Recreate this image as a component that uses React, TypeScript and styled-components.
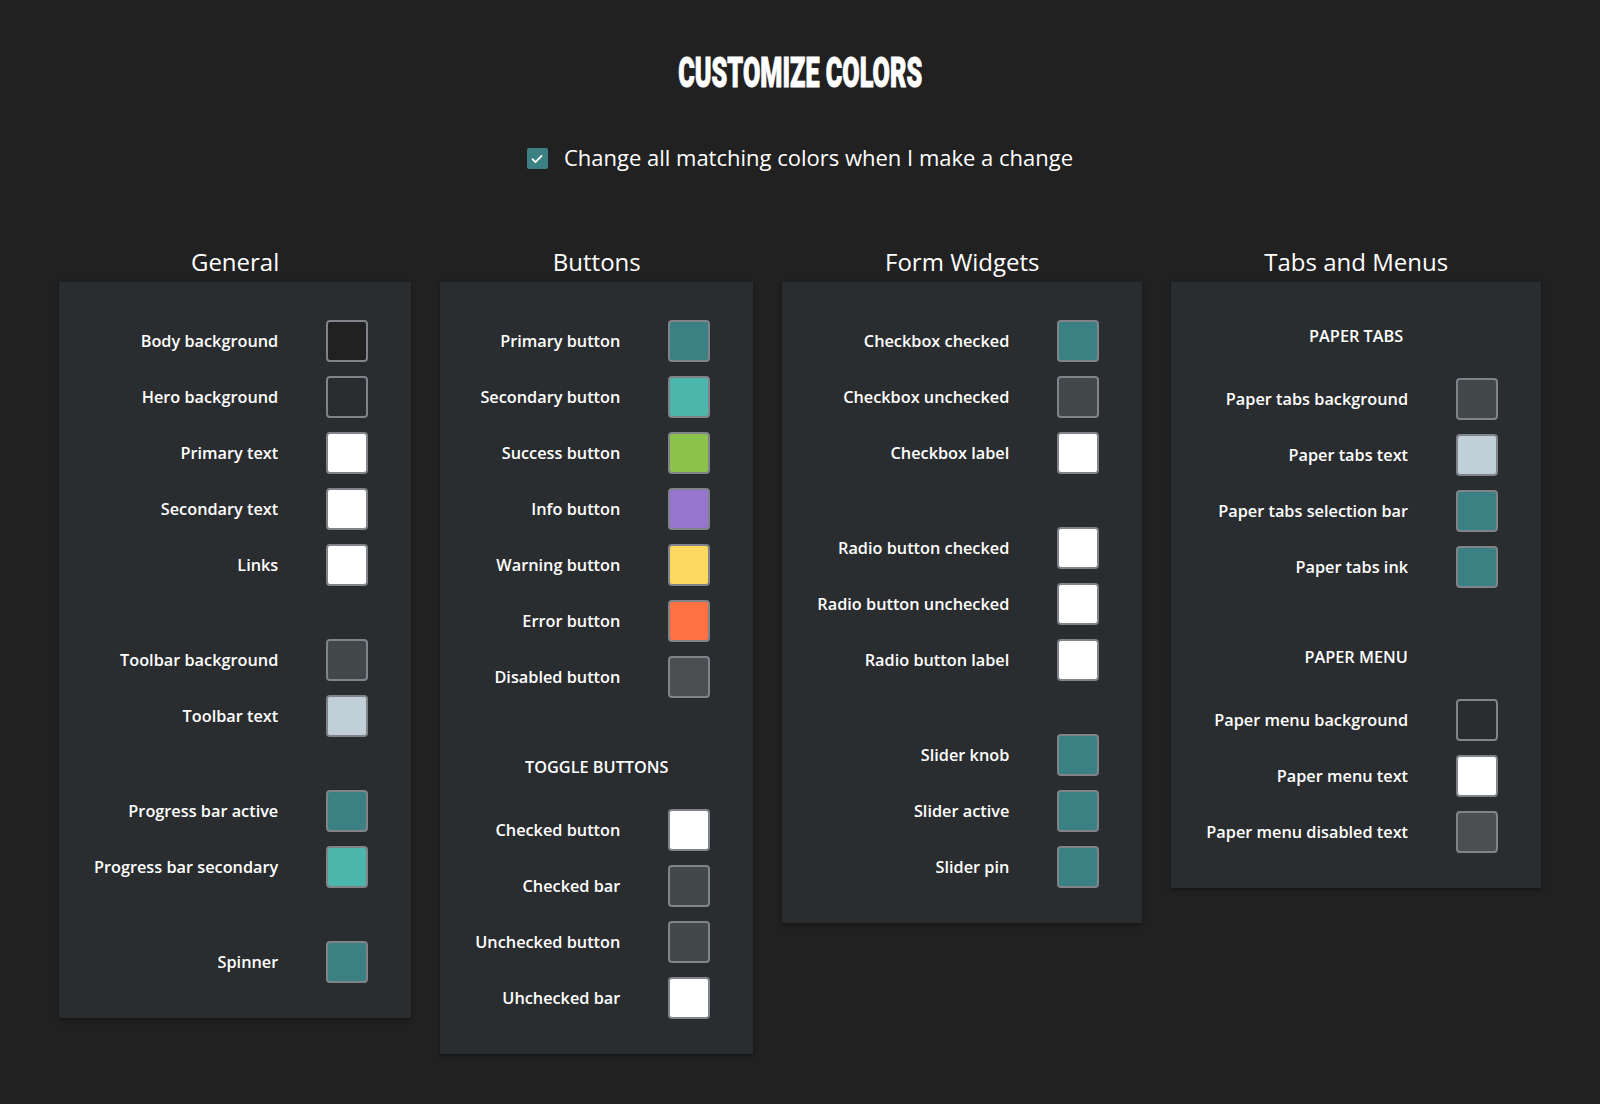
import React from 'react'
import styled, { createGlobalStyle } from 'styled-components'

const TEAL = '#3b8183'
const AQUA = '#4db6ac'
const WHITE = '#ffffff'
const SLATE = '#40484a'
const MIST = '#c1d0d8'
const DIM = '#4b4f51'

type Item = { label: string; color: string }
type Group = { title?: string; items: Item[] }
type Section = { title: string; groups: Group[] }

const sections: Section[] = [
  {
    title: 'General',
    groups: [
      {
        items: [
          { label: 'Body background', color: '#212121' },
          { label: 'Hero background', color: '#2a2d2f' },
          { label: 'Primary text', color: WHITE },
          { label: 'Secondary text', color: WHITE },
          { label: 'Links', color: WHITE },
        ],
      },
      {
        items: [
          { label: 'Toolbar background', color: SLATE },
          { label: 'Toolbar text', color: MIST },
        ],
      },
      {
        items: [
          { label: 'Progress bar active', color: TEAL },
          { label: 'Progress bar secondary', color: AQUA },
        ],
      },
      { items: [{ label: 'Spinner', color: TEAL }] },
    ],
  },
  {
    title: 'Buttons',
    groups: [
      {
        items: [
          { label: 'Primary button', color: TEAL },
          { label: 'Secondary button', color: AQUA },
          { label: 'Success button', color: '#8bc34a' },
          { label: 'Info button', color: '#9575cd' },
          { label: 'Warning button', color: '#fdd95f' },
          { label: 'Error button', color: '#ff7043' },
          { label: 'Disabled button', color: DIM },
        ],
      },
      {
        title: 'Toggle buttons',
        items: [
          { label: 'Checked button', color: WHITE },
          { label: 'Checked bar', color: SLATE },
          { label: 'Unchecked button', color: SLATE },
          { label: 'Uhchecked bar', color: WHITE },
        ],
      },
    ],
  },
  {
    title: 'Form Widgets',
    groups: [
      {
        items: [
          { label: 'Checkbox checked', color: TEAL },
          { label: 'Checkbox unchecked', color: SLATE },
          { label: 'Checkbox label', color: WHITE },
        ],
      },
      {
        items: [
          { label: 'Radio button checked', color: WHITE },
          { label: 'Radio button unchecked', color: WHITE },
          { label: 'Radio button label', color: WHITE },
        ],
      },
      {
        items: [
          { label: 'Slider knob', color: TEAL },
          { label: 'Slider active', color: TEAL },
          { label: 'Slider pin', color: TEAL },
        ],
      },
    ],
  },
  {
    title: 'Tabs and Menus',
    groups: [
      {
        title: 'Paper tabs',
        items: [
          { label: 'Paper tabs background', color: SLATE },
          { label: 'Paper tabs text', color: MIST },
          { label: 'Paper tabs selection bar', color: TEAL },
          { label: 'Paper tabs ink', color: TEAL },
        ],
      },
      {
        title: 'Paper menu',
        items: [
          { label: 'Paper menu background', color: '#2a2d2f' },
          { label: 'Paper menu text', color: WHITE },
          { label: 'Paper menu disabled text', color: DIM },
        ],
      },
    ],
  },
]

const GlobalStyle = createGlobalStyle`
  body {
    margin: 0;
    background: #212121;
    color: #ffffff;
    font-family: 'Open Sans', 'Liberation Sans', sans-serif;
  }
`

const Page = styled.div`
  min-height: 1104px;
  box-sizing: border-box;
  padding-top: 52px;
  display: flex;
  flex-direction: column;
  align-items: center;
`

const Title = styled.h1`
  margin: 0;
  font-family: Roboto, 'Liberation Sans', sans-serif;
  font-weight: 900;
  font-size: 42px;
  line-height: 42px;
  white-space: nowrap;
  -webkit-text-stroke: 1px #ffffff;
  transform: scaleX(0.6);
`

const MatchRow = styled.label`
  margin-top: 48px;
  display: flex;
  align-items: center;
  gap: 16px;
  font-size: 22px;
  line-height: 30px;
`

const CheckBox = styled.span`
  width: 21px;
  height: 21px;
  margin-top: 3px;
  border-radius: 2px;
  background: ${TEAL};
  display: flex;
  align-items: center;
  justify-content: center;
`

const Columns = styled.div`
  margin-top: 74px;
  display: flex;
  align-items: flex-start;
  justify-content: center;
  gap: 29px;
`

const Column = styled.section`
  display: flex;
  flex-direction: column;
`

const ColumnTitle = styled.h2`
  margin: 0 0 4px;
  font-size: 24px;
  line-height: 32px;
  font-weight: 500;
  text-align: center;
`

const Card = styled.div`
  background: #2a2d2f;
  padding: 38px 43px 35px 35px;
  display: flex;
  flex-direction: column;
  gap: 53px;
  box-shadow: 0 2px 4px rgba(0, 0, 0, 0.35);
`

const GroupBox = styled.div`
  display: flex;
  flex-direction: column;
  gap: 14px;
`

const GroupTitle = styled.div`
  margin: 4px -43px 16px -35px;
  text-align: center;
  font-size: 16.3px;
  line-height: 24px;
  font-weight: 600;
  text-transform: uppercase;
`

const Row = styled.div`
  display: flex;
  align-items: center;
  justify-content: flex-end;
  gap: 48px;
`

const Label = styled.span`
  font-size: 16.3px;
  line-height: 24px;
  font-weight: 600;
  white-space: nowrap;
  text-align: right;
`

const Swatch = styled.button<{ $color: string }>`
  flex: none;
  width: 42px;
  height: 42px;
  box-sizing: border-box;
  padding: 0;
  border: 2px solid #80848a;
  border-radius: 4px;
  background: ${(p) => p.$color};
  cursor: pointer;
`

export default function App() {
  return (
    <Page>
      <GlobalStyle />
      <Title>CUSTOMIZE COLORS</Title>
      <MatchRow>
        <CheckBox>
          <svg width="14" height="14" viewBox="0 0 14 14" fill="none">
            <path d="M2.5 7.2l3 3 6-6.4" stroke="#fff" strokeWidth="1.8" strokeLinecap="round" strokeLinejoin="round" />
          </svg>
        </CheckBox>
        Change all matching colors when I make a change
      </MatchRow>
      <Columns>
        {sections.map((section) => (
          <Column key={section.title}>
            <ColumnTitle>{section.title}</ColumnTitle>
            <Card>
              {section.groups.map((group, gi) => (
                <GroupBox key={gi}>
                  {group.title && <GroupTitle>{group.title}</GroupTitle>}
                  {group.items.map((item) => (
                    <Row key={item.label}>
                      <Label>{item.label}</Label>
                      <Swatch $color={item.color} aria-label={item.label} />
                    </Row>
                  ))}
                </GroupBox>
              ))}
            </Card>
          </Column>
        ))}
      </Columns>
    </Page>
  )
}
